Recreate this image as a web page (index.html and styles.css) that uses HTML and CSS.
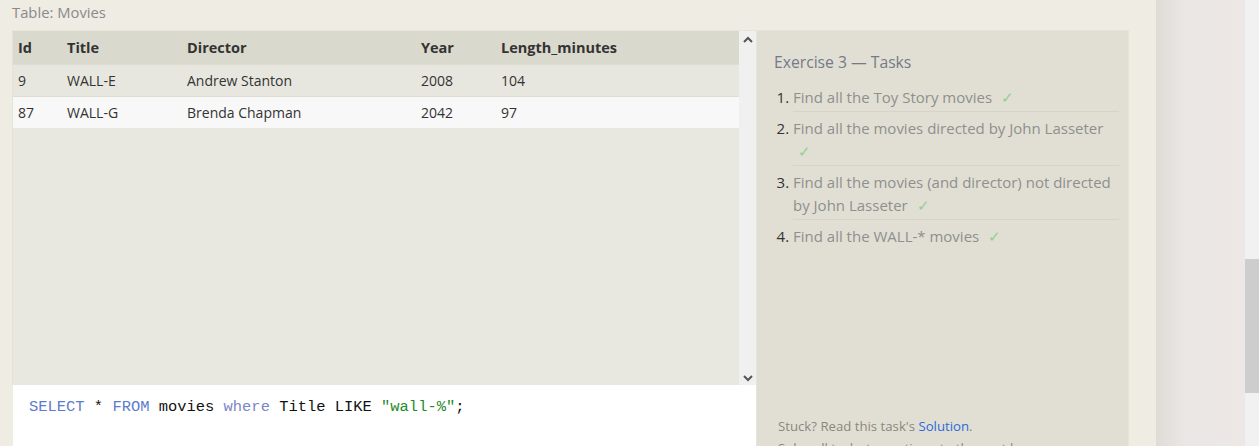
FILE: index.html
```html
<!DOCTYPE html>
<html>
<head>
<meta charset="utf-8">
<link rel="stylesheet" href="styles.css">
</head>
<body>
<div class="page">
  <main class="main">
    <div class="caption">Table: Movies</div>
    <div class="workspace">
      <div class="left">
        <div class="results">
          <div class="table-area">
            <table class="tbl">
              <colgroup>
                <col class="c-id"><col class="c-title"><col class="c-dir"><col class="c-year"><col>
              </colgroup>
              <thead>
                <tr><th>Id</th><th>Title</th><th>Director</th><th>Year</th><th>Length_minutes</th></tr>
              </thead>
              <tbody>
                <tr class="odd"><td>9</td><td>WALL-E</td><td>Andrew Stanton</td><td>2008</td><td>104</td></tr>
                <tr class="even"><td>87</td><td>WALL-G</td><td>Brenda Chapman</td><td>2042</td><td>97</td></tr>
              </tbody>
            </table>
          </div>
          <div class="vscroll">
            <svg class="arrow" width="10" height="7" viewBox="0 0 10 7"><path d="M1 6 L5 2 L9 6" fill="none" stroke="#555" stroke-width="2"/></svg>
            <svg class="arrow" width="10" height="7" viewBox="0 0 10 7"><path d="M1 1 L5 5 L9 1" fill="none" stroke="#555" stroke-width="2"/></svg>
          </div>
        </div>
        <div class="editor">
          <code><span class="kw">SELECT</span> * <span class="kw">FROM</span> movies <span class="kw2">where</span> Title LIKE <span class="str">"wall-%"</span>;</code>
        </div>
      </div>
      <aside class="tasks">
        <h3 class="tasks-title">Exercise 3 — Tasks</h3>
        <ol class="task-list">
          <li>Find all the Toy Story movies <span class="check">✓</span></li>
          <li>Find all the movies directed by John Lasseter <span class="check">✓</span></li>
          <li>Find all the movies (and director) not directed by John Lasseter <span class="check">✓</span></li>
          <li class="last">Find all the WALL-* movies <span class="check">✓</span></li>
        </ol>
        <div class="spacer"></div>
        <p class="help">Stuck? Read this task's <a class="link">Solution</a>.</p>
        <p class="help">Solve all tasks to continue to the next lesson.</p>
      </aside>
    </div>
  </main>
  <div class="sidebar"></div>
  <div class="page-scroll"><div class="thumb"></div></div>
</div>
</body>
</html>
```

FILE: styles.css
```css
html, body {
  margin: 0;
  padding: 0;
  height: 100%;
  overflow: hidden;
}
body {
  background: #efece4;
  font-family: "Open Sans", "Noto Sans", sans-serif;
  color: #333;
}
.page {
  display: flex;
  height: 446px;
}
.main {
  width: 1144px;
  padding-left: 12px;
  display: flex;
  flex-direction: column;
}
.caption {
  height: 30px;
  line-height: 24px;
  font-size: 14.8px;
  color: #8a8a8a;
  flex: none;
}
.workspace {
  display: flex;
  height: 433px;
  flex: none;
}
.left {
  width: 744px;
  display: flex;
  flex-direction: column;
}
.results {
  height: 355px;
  display: flex;
  border-top: 1px solid #e6e5dc;
  box-sizing: border-box;
}
.table-area {
  flex: 1;
  background: #e9e8e0;
  border-left: 1px solid #e4e3da;
}
.tbl {
  width: 100%;
  table-layout: fixed;
  border-collapse: collapse;
  font-size: 14px;
}
.c-id { width: 49px; }
.c-title { width: 120px; }
.c-dir { width: 234px; }
.c-year { width: 80px; }
.tbl th {
  background: #dad9cd;
  text-align: left;
  font-weight: 700;
  font-size: 14.5px;
  height: 33px;
  padding: 1px 5px 0;
  box-sizing: border-box;
}
.tbl td {
  height: 31px;
  padding: 0 5px;
  border-top: 1px solid #dedcd3;
}
.tbl tr.odd td { background: #e8e7df; }
.tbl tr.even td { background: #f8f8f8; }
.vscroll {
  width: 17px;
  background: #f0f0f0;
  display: flex;
  flex-direction: column;
  justify-content: space-between;
  align-items: center;
  padding: 5px 0 3px;
  box-sizing: border-box;
}
.editor {
  flex: 1;
  background: #fff;
  margin-left: 1px;
  padding: 9px 0 0 16px;
}
.editor code {
  font-family: "Liberation Mono", "DejaVu Sans Mono", monospace;
  font-size: 15.45px;
  color: #111;
}
.kw { color: #5b7ccc; }
.kw2 { color: #7c86c6; }
.str { color: #1f8a2a; }
.tasks {
  width: 373px;
  background: #e1dfd3;
  border: 1px solid #e7e5da;
  border-bottom: none;
  box-sizing: border-box;
  padding: 20px 9px 0 17px;
  display: flex;
  flex-direction: column;
}
.tasks-title {
  margin: 0 0 11px;
  font-weight: 400;
  font-size: 15.7px;
  color: #747a88;
}
.task-list {
  margin: 0;
  padding-left: 19px;
  font-size: 15px;
  color: #8f8f8f;
  line-height: 23px;
}
.task-list li {
  padding: 2px 0 2px;
  border-bottom: 1px solid #d6d4c8;
  margin-bottom: 3px;
}
.task-list li.last { border-bottom: none; }
.task-list li::marker { color: #333; }
.check {
  color: #8fcf8f;
  margin-left: 5px;
}
.spacer { flex: 1; }
.help {
  margin: 0;
  padding-left: 4px;
  font-size: 13.2px;
  line-height: 22px;
  color: #8d8680;
}
.help:last-child { margin-bottom: 4px; }
.link { color: #2a6ad8; }
.sidebar {
  width: 89px;
  background: linear-gradient(to right, #dfdcd8, #eae6e3 30%, #ede8e5);
}
.page-scroll {
  width: 14px;
  background: #f1f1f1;
  padding-top: 259px;
  box-sizing: border-box;
}
.thumb {
  height: 134px;
  background: #cdcdcd;
}
```
